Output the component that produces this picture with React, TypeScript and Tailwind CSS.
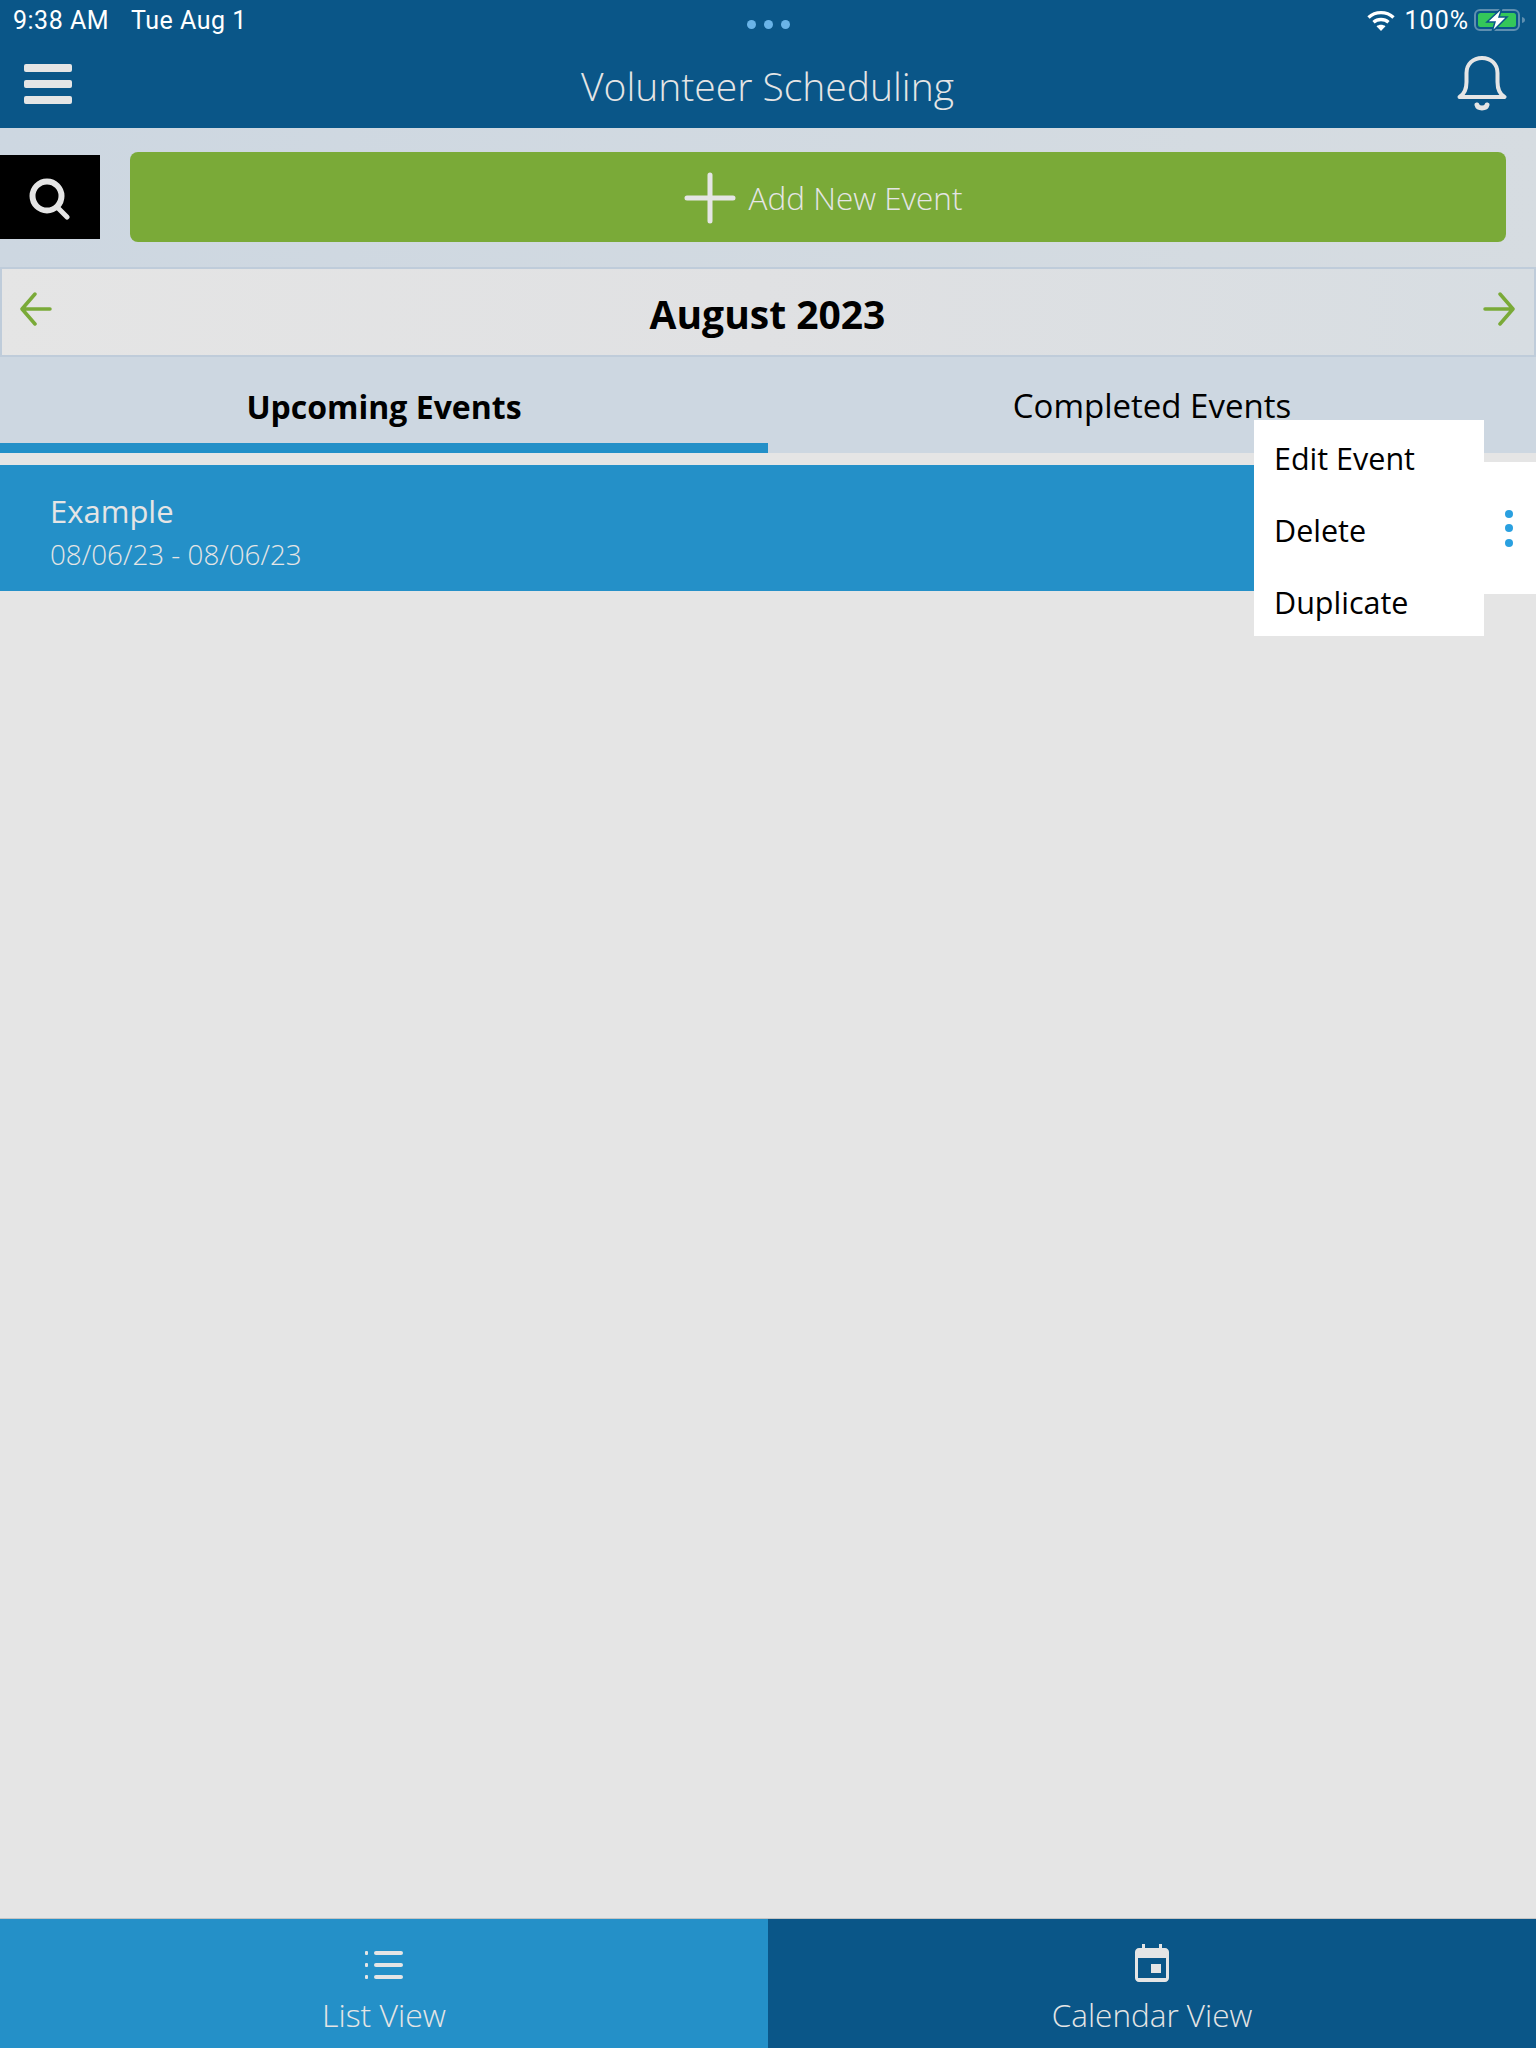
const sans = { fontFamily: '"Open Sans", "Noto Sans", sans-serif' };

function StatusBar() {
  return (
    <div className="relative flex h-10 items-center justify-between pl-[13px] pr-[10px] text-white font-['Roboto',sans-serif] text-[25px] leading-none">
      <div className="flex gap-[22px] tracking-[0.5px]">
        <span>9:38 AM</span>
        <span>Tue Aug 1</span>
      </div>
      <div className="absolute left-[747px] top-5 flex gap-2">
        <span className="h-[9px] w-[9px] rounded-full bg-[#6ab4e8]" />
        <span className="h-[9px] w-[9px] rounded-full bg-[#6ab4e8]" />
        <span className="h-[9px] w-[9px] rounded-full bg-[#6ab4e8]" />
      </div>
      <div className="flex items-center">
        <svg width="28" height="21" viewBox="0 0 28 21" fill="none" stroke="white" strokeWidth="3.4">
          <path d="M1.5 7.5C8.500 1 19.500 1 26.500 7.500" />
          <path d="M6.500 12.300C10.700 8.600 17.300 8.600 21.500 12.300" />
          <path d="M14 21l-4.500-4.800c2.600-2 6.400-2 9 0z" fill="white" stroke="none" />
        </svg>
        <span className="ml-[10px] tracking-[1px]">100%</span>
        <svg className="ml-[5px]" width="52" height="24" viewBox="0 0 52 24" fill="none">
          <rect x="1" y="2" width="44" height="20" rx="5" stroke="#5f8fb0" strokeWidth="2" />
          <rect x="4" y="5" width="38" height="14" rx="2.500" fill="#34c759" />
          <path d="M48 9c2 .5 3 1.500 3 3s-1 2.500-3 3z" fill="#5f8fb0" />
          <path d="M28 0L13 14h8l-3 10 15-15h-8z" fill="white" stroke="#0a5688" strokeWidth="1.500" />
        </svg>
      </div>
    </div>
  );
}

function NavBar() {
  return (
    <div className="flex h-[88px] items-start justify-between pl-6 pr-[29px]">
      <div className="mt-6 flex w-12 flex-col gap-2">
        <span className="h-2 rounded-[2px] bg-[#e5e5e5]" />
        <span className="h-2 rounded-[2px] bg-[#e5e5e5]" />
        <span className="h-2 rounded-[2px] bg-[#e5e5e5]" />
      </div>
      <div className="ml-[6px] mt-6 text-[39px] font-light leading-[44px] text-[#e5e5e5]" style={sans}>
        Volunteer Scheduling
      </div>
      <svg className="mt-4" width="50" height="56" viewBox="0 0 50 56" fill="none" stroke="#e5e5e5" strokeWidth="4" strokeLinecap="round" strokeLinejoin="round">
        <path d="M2.500 41c5-3 7-8 7-15V17C9.500 8 16 2 25 2s15.500 6 15.500 15v9c0 7 2 12 7 15z" />
        <path d="M20 49c1 4 9 4 10 0" strokeWidth="5" />
      </svg>
    </div>
  );
}

function ActionRow() {
  return (
    <div className="flex items-center pr-[30px] pt-6">
      <div className="flex h-[84px] w-[100px] items-center justify-center bg-black pt-[3px]">
        <svg width="42" height="42" viewBox="0 0 42 42" fill="none" stroke="#e5e5e5" strokeWidth="6" strokeLinecap="round">
          <circle cx="18" cy="18" r="14.500" />
          <path d="M29 30l9 9" strokeWidth="5" />
        </svg>
      </div>
      <div className="ml-[30px] flex h-[90px] flex-1 items-center justify-center rounded-lg bg-[#7aaa38] pl-[10px] pt-[2px]">
        <svg className="mr-[13px]" width="52" height="52" viewBox="0 0 52 52" stroke="#e5e5e5" strokeWidth="5" strokeLinecap="round">
          <path d="M26 3v46M3 26h46" />
        </svg>
        <span className="text-[31.500px] font-light leading-none text-[#e5e5e5]" style={sans}>
          Add New Event
        </span>
      </div>
    </div>
  );
}

function MonthBar() {
  return (
    <div className="mt-[25px] flex h-[90px] items-center justify-between border-2 border-[#bfccda] bg-gradient-to-r from-[#e5e5e5] via-[#e0e1e3] to-[#d7dde2] pl-[18px] pr-[19px]">
      <svg className="-mt-[7px]" width="32" height="34" viewBox="0 0 32 34" fill="none" stroke="#7aaa38" strokeWidth="3.500" strokeLinecap="round" strokeLinejoin="round">
        <path d="M30 17H2M15 2L2 17l13 15" />
      </svg>
      <div className="mt-[2px] text-[39px] font-bold leading-none text-black" style={sans}>
        August 2023
      </div>
      <svg className="-mt-[7px]" width="32" height="34" viewBox="0 0 32 34" fill="none" stroke="#7aaa38" strokeWidth="3.500" strokeLinecap="round" strokeLinejoin="round">
        <path d="M2 17h28M17 2l13 15-13 15" />
      </svg>
    </div>
  );
}

function Tabs() {
  return (
    <div className="flex h-24">
      <div className="flex flex-1 items-center justify-center border-b-10 border-[#2490c8] text-[32px] font-bold leading-none text-black" style={sans}>
        <span className="mt-[14px]">Upcoming Events</span>
      </div>
      <div className="flex flex-1 items-center justify-center pb-[10px] text-[33px] font-medium leading-none text-black" style={sans}>
        <span className="mt-[11px]">Completed Events</span>
      </div>
    </div>
  );
}

function EventRow() {
  return (
    <div className="relative mt-3 flex h-[126px]" style={sans}>
      <div className="flex flex-1 flex-col justify-center bg-[#2490c8] pl-[50px] pt-[6px]">
        <div className="text-[31px] font-medium leading-[44px] text-[#e5e5e5]">Example</div>
        <div className="mt-[2px] text-[27.800px] font-light leading-[38px] text-[#e5e5e5]">08/06/23 - 08/06/23</div>
      </div>
      <div className="-my-[3px] flex w-[60px] flex-col items-center justify-center gap-[6.500px] bg-white pl-[6px]">
        <span className="h-2 w-2 rounded-full bg-[#2aa0e0]" />
        <span className="h-2 w-2 rounded-full bg-[#2aa0e0]" />
        <span className="h-2 w-2 rounded-full bg-[#2aa0e0]" />
      </div>
      <div className="absolute left-[1254px] top-[-45px] flex h-[216px] w-[230px] flex-col bg-white pl-5 pt-[2px] text-[30.500px] leading-none text-black">
        <div className="flex h-[72px] shrink-0 items-center">Edit Event</div>
        <div className="flex h-[72px] shrink-0 items-center">Delete</div>
        <div className="flex h-[72px] shrink-0 items-center">Duplicate</div>
      </div>
    </div>
  );
}

function BottomBar() {
  return (
    <div className="flex h-[130px] border-t border-[#c4c4c4] text-[32px] font-light leading-none text-[#e5e5e5]" style={sans}>
      <div className="flex flex-1 flex-col items-center bg-[#2490c8]">
        <svg className="mt-[31px]" width="38" height="30" viewBox="0 0 38 30" fill="#e5e5e5">
          <rect x="0" y="1" width="3" height="4" rx="1" />
          <rect x="0" y="13" width="3" height="4" rx="1" />
          <rect x="0" y="25" width="3" height="4" rx="1" />
          <rect x="9" y="1" width="29" height="4" rx="2" />
          <rect x="9" y="13" width="29" height="4" rx="2" />
          <rect x="9" y="25" width="29" height="4" rx="2" />
        </svg>
        <span className="mt-[19px]">List View</span>
      </div>
      <div className="flex flex-1 flex-col items-center bg-[#0a5688]">
        <svg className="mt-[25px]" width="34" height="38" viewBox="0 0 34 38">
          <path fill="#e5e5e5" d="M7 0h3v4h14V0h3v4h3c2.200 0 4 1.800 4 4v26c0 2.200-1.800 4-4 4H4c-2.200 0-4-1.800-4-4V8c0-2.200 1.800-4 4-4h3z" />
          <rect x="3" y="14" width="28" height="20" fill="#0a5688" />
          <rect x="16" y="20" width="10" height="9" fill="#e5e5e5" />
        </svg>
        <span className="mt-[17px] text-[31.500px]">Calendar View</span>
      </div>
    </div>
  );
}

export default function App() {
  return (
    <div className="flex h-[2048px] w-[1536px] flex-col overflow-hidden bg-[#e5e5e5]">
      <div className="bg-[#0a5688]">
        <StatusBar />
        <NavBar />
      </div>
      <div className="bg-gradient-to-r from-[#cdd7e1] to-[#d6dce1]">
        <ActionRow />
        <MonthBar />
      </div>
      <div className="bg-[#cdd7e1]">
        <Tabs />
      </div>
      <EventRow />
      <div className="flex-1" />
      <BottomBar />
    </div>
  );
}
